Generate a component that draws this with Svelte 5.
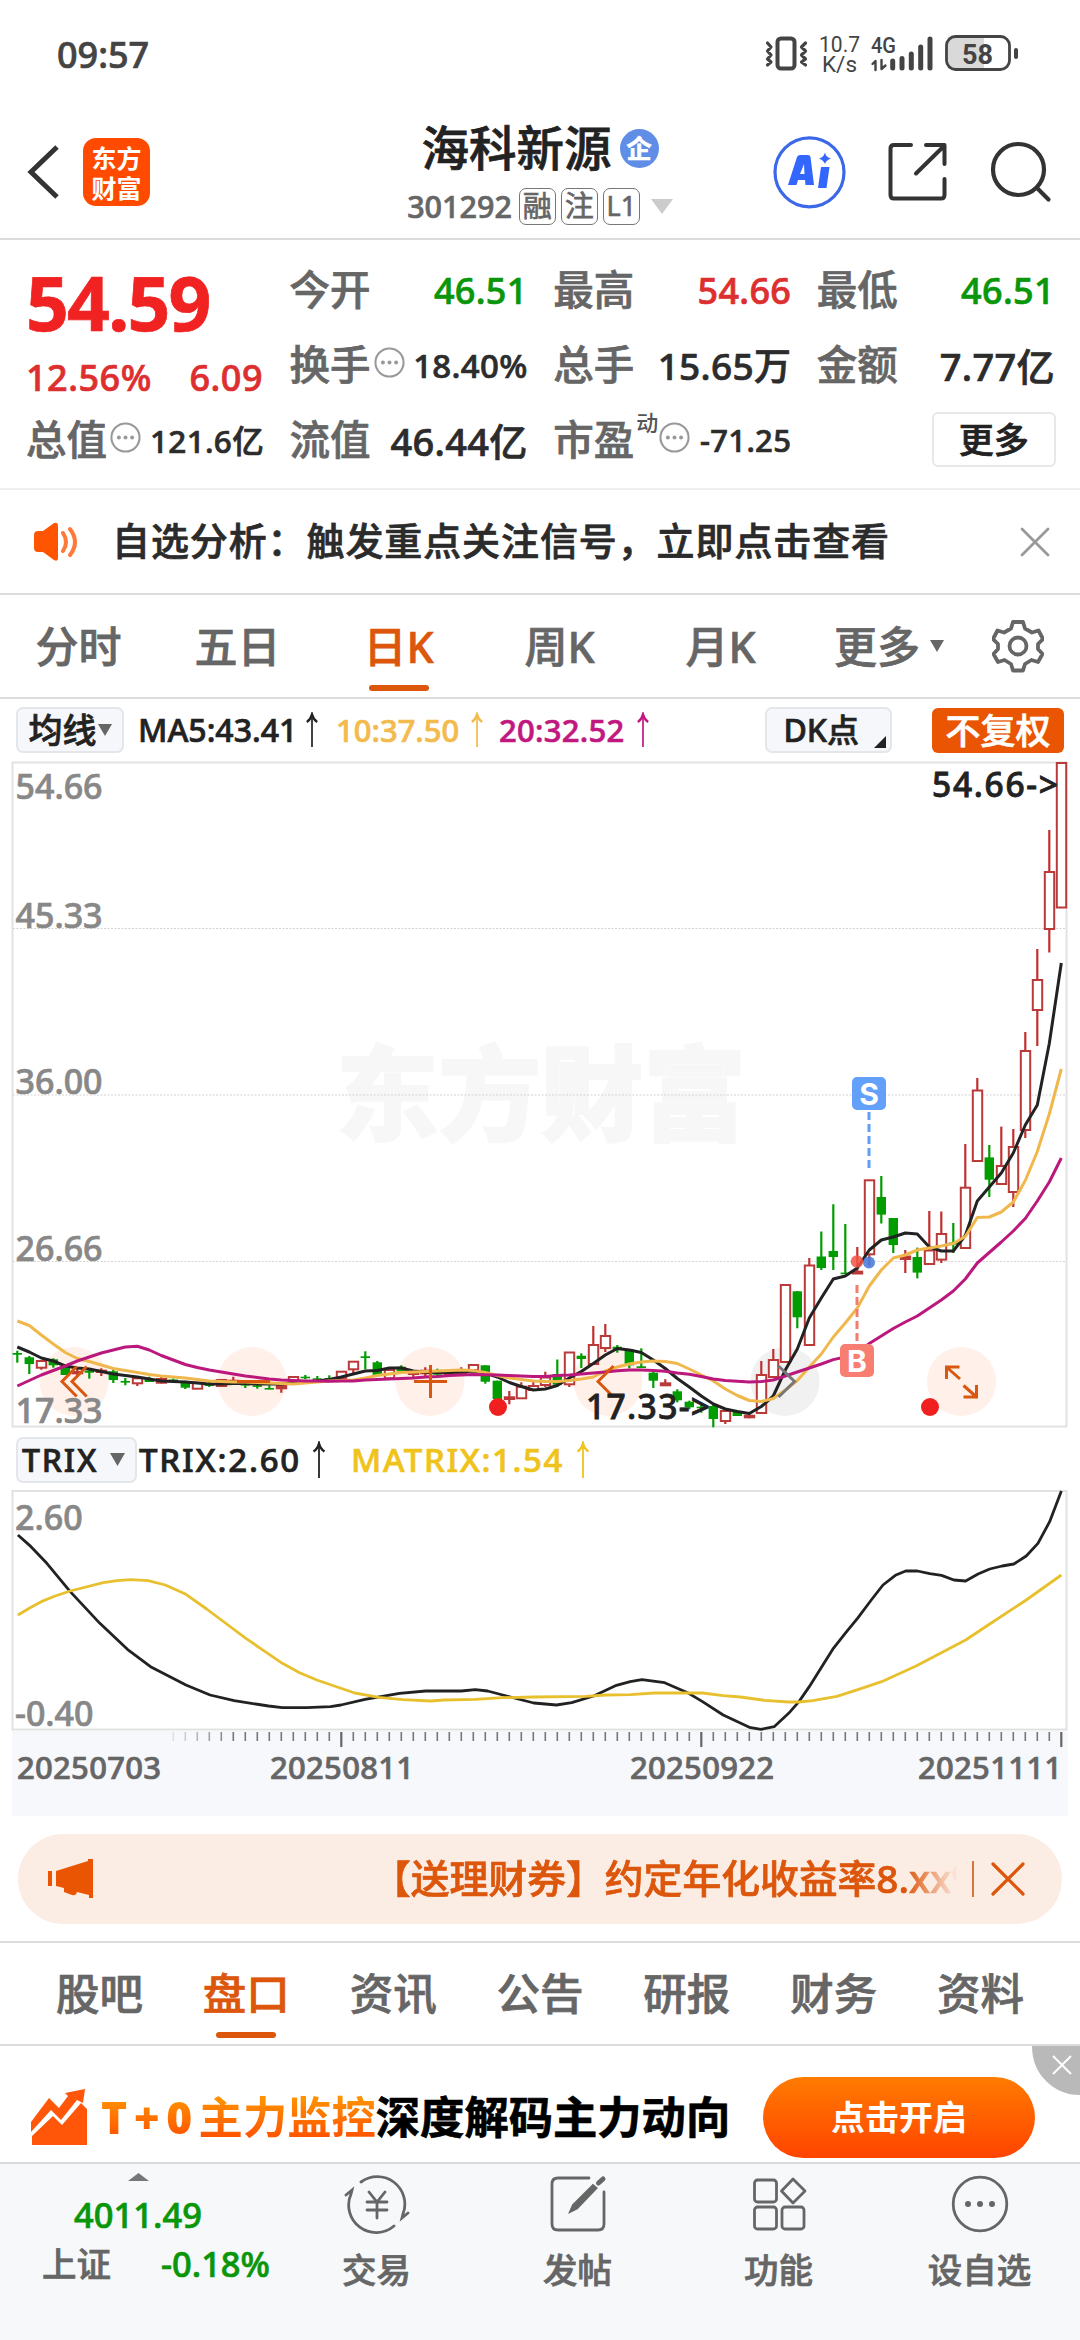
<script>
  const quotes = [
    { label: '今开', value: '46.51', tone: 'down', size: 36 },
    { label: '最高', value: '54.66', tone: 'up', size: 36 },
    { label: '最低', value: '46.51', tone: 'down', size: 36 },
    { label: '换手', value: '18.40%', info: true, size: 33 },
    { label: '总手', value: '15.65万', size: 37 },
    { label: '金额', value: '7.77亿', size: 38 },
    { label: '总值', value: '121.6亿', info: true, size: 31.5 },
    { label: '流值', value: '46.44亿', size: 38 },
    { label: '市盈', sup: '动', value: '-71.25', info: true, size: 31 }
  ];

  const periods = ['分时', '五日', '日K', '周K', '月K'];
  const sections = ['股吧', '盘口', '资讯', '公告', '研报', '财务', '资料'];

  const step = 12;
  const firstX = 17.3;
  const cx = (i) => firstX + i * step;

  // Each candle: direction, high, body top, body bottom, low (canvas y)
  const candles = [
    ['g', 1350.7, 1353, 1354.7, 1362.7], ['g', 1356, 1357.3, 1364, 1374], ['r', 1360, 1361, 1367.7, 1369.7],
    ['g', 1358.3, 1359.3, 1365.3, 1367.7], ['g', 1367, 1367.3, 1375, 1375], ['r', 1368.7, 1372, 1373.3, 1376.7],
    ['g', 1369.3, 1370.7, 1372.7, 1378.7], ['r', 1368.3, 1370.7, 1372, 1376], ['g', 1369, 1371.3, 1380, 1383],
    ['g', 1378, 1381, 1382, 1385.3], ['r', 1377.7, 1378.3, 1383.3, 1386], ['g', 1376.7, 1379.3, 1382, 1382],
    ['r', 1376.7, 1379, 1382.7, 1383.5], ['g', 1378.5, 1379.5, 1381.7, 1382], ['g', 1380.7, 1382, 1387.7, 1389],
    ['r', 1382, 1382.7, 1388.7, 1388.7], ['g', 1380.7, 1383, 1386, 1387], ['r', 1379.3, 1380, 1386, 1386],
    ['r', 1376.7, 1380.7, 1382, 1384], ['g', 1380.7, 1384, 1385, 1388], ['g', 1381.3, 1385.3, 1386.3, 1388.7],
    ['g', 1385.3, 1388, 1389.3, 1389.3], ['r', 1384, 1386, 1388.3, 1392.7], ['r', 1376.7, 1377, 1381.3, 1381.3],
    ['g', 1375, 1376.7, 1378, 1379.3], ['g', 1376, 1378.3, 1379.3, 1381], ['g', 1375.3, 1378, 1379, 1381],
    ['r', 1371, 1371.7, 1378.3, 1378.3], ['r', 1361.3, 1361.7, 1369.3, 1373.3], ['g', 1351.3, 1356.3, 1358, 1369.3],
    ['g', 1361, 1362.3, 1376, 1376], ['r', 1367.7, 1370, 1378.3, 1378.3], ['g', 1365.3, 1366.7, 1371.3, 1372],
    ['r', 1370, 1372.7, 1374, 1378], ['r', 1367.3, 1370.7, 1373.3, 1377], ['g', 1368.7, 1371.3, 1374.7, 1376.7],
    ['r', 1370, 1371.3, 1374, 1376], ['r', 1367.3, 1370, 1373.3, 1374], ['r', 1364.7, 1365, 1370, 1370],
    ['g', 1365.3, 1365.3, 1381.7, 1383.7], ['g', 1380.7, 1380.7, 1399, 1400], ['r', 1391, 1397.3, 1399, 1404.3],
    ['r', 1382.3, 1386.7, 1398.3, 1398.3], ['r', 1380, 1386, 1390, 1390], ['r', 1371.7, 1377.5, 1385, 1387],
    ['g', 1359.5, 1374, 1384.7, 1387], ['r', 1352, 1352.5, 1384.3, 1387], ['g', 1353.3, 1355.7, 1359, 1368],
    ['r', 1326, 1345, 1364, 1364.3], ['r', 1324, 1336, 1348, 1352], ['g', 1345, 1346.7, 1349, 1352.7],
    ['g', 1349.3, 1349.3, 1365.3, 1368.3], ['g', 1348.3, 1366.3, 1368, 1368], ['g', 1372, 1372.7, 1380.7, 1388],
    ['r', 1379.3, 1383.3, 1385.3, 1386], ['g', 1389.3, 1391.3, 1400.3, 1402.3], ['g', 1400.7, 1401.7, 1407.3, 1409.3],
    ['g', 1404, 1406.7, 1408, 1412.7], ['g', 1405, 1406, 1419, 1427.3], ['r', 1409, 1411, 1421, 1424],
    ['g', 1410.7, 1411.3, 1416, 1416], ['r', 1414, 1415.7, 1417.3, 1418.3], ['r', 1361, 1375, 1413, 1413],
    ['r', 1349, 1360, 1377, 1377], ['r', 1284.3, 1285, 1362, 1362], ['g', 1291, 1291.3, 1317.3, 1328.3],
    ['r', 1258, 1265.5, 1345, 1345], ['g', 1231.5, 1256.5, 1268, 1270], ['g', 1204.3, 1251, 1257, 1270],
    ['g', 1224, 1272.6, 1274, 1274], ['r', 1247, 1271.7, 1273.5, 1273.5], ['r', 1179.7, 1180.3, 1254.3, 1266],
    ['g', 1176, 1197, 1214.6, 1223.5], ['g', 1218, 1218, 1245, 1253], ['r', 1250, 1256.5, 1259, 1273],
    ['g', 1247.6, 1257, 1272.6, 1278.4], ['r', 1211, 1250.5, 1264, 1265], ['r', 1211.4, 1234, 1259.6, 1263],
    ['g', 1223, 1242.5, 1244.5, 1253], ['r', 1144, 1187.7, 1248, 1248], ['r', 1078, 1090.5, 1161, 1161],
    ['g', 1145, 1157.4, 1179.7, 1197], ['r', 1126.6, 1166, 1184, 1184], ['r', 1129, 1147, 1192, 1207],
    ['r', 1032, 1051, 1130, 1138], ['r', 949, 980, 1010, 1046], ['r', 830, 872, 929, 952.5], ['r', 763, 763, 907.5, 908]
  ];

  const ma5 = [1347, 1352, 1358, 1361, 1366, 1368, 1369, 1371.5, 1374, 1375.5, 1377, 1379, 1381, 1381.5, 1382, 1383, 1384, 1384, 1383.5, 1383.5, 1384, 1384, 1384, 1383, 1382, 1381, 1379.5, 1377, 1374, 1371, 1370.5, 1368, 1368, 1371, 1372, 1372.5, 1372.5, 1372, 1371, 1373, 1377, 1382.5, 1386.5, 1390, 1389, 1385.5, 1378, 1371.5, 1363.5, 1355, 1348.5, 1350, 1352.5, 1360, 1368.5, 1378.5, 1387, 1396, 1404, 1409, 1411.5, 1413.5, 1406.5, 1396, 1370, 1349, 1318, 1298, 1279, 1276, 1268, 1250, 1240, 1237, 1233, 1234, 1247, 1251, 1251, 1235.5, 1201, 1187, 1173, 1153, 1125, 1105, 1043.5, 963];
  const ma10 = [1321, 1325.5, 1335, 1344, 1352.5, 1358.5, 1361.5, 1365, 1368.5, 1370.5, 1372.5, 1374.5, 1376, 1377, 1378, 1379.5, 1381, 1381.5, 1382, 1382, 1382.5, 1383, 1383.5, 1384, 1383, 1382, 1381, 1380.5, 1380, 1378, 1375.5, 1374, 1372.5, 1372, 1371.5, 1371, 1370.5, 1370, 1370.5, 1372.5, 1375.5, 1378, 1379.5, 1381, 1381.5, 1381.5, 1380.5, 1379, 1377, 1371, 1367, 1364, 1362, 1361, 1361.5, 1363.5, 1369, 1375, 1381, 1389, 1395.5, 1400.5, 1401.5, 1398.5, 1390, 1380.5, 1367, 1354, 1337, 1323, 1308, 1286, 1270, 1258, 1255, 1250, 1248, 1246, 1243.5, 1236.5, 1217.5, 1217, 1212, 1202, 1180.5, 1151.5, 1114, 1069];
  const ma20 = [1386, 1380.5, 1375, 1370.5, 1366, 1361, 1357, 1353, 1350, 1347, 1346.3, 1350, 1355.5, 1360, 1364.5, 1367.5, 1370, 1372, 1374, 1376, 1377.5, 1379, 1380, 1380.5, 1381, 1381, 1381.3, 1381, 1381, 1380, 1379.5, 1379, 1378.5, 1378, 1377, 1376.5, 1375.5, 1375, 1374.5, 1374.7, 1375, 1375.5, 1376, 1376.5, 1376.5, 1375.5, 1375, 1374, 1373, 1372, 1370.7, 1370, 1370, 1370.5, 1371.3, 1373, 1374.3, 1376.5, 1379, 1380.5, 1381.3, 1382, 1381.5, 1380, 1376, 1372, 1368, 1364, 1359.6, 1357, 1354, 1343.5, 1336, 1328.5, 1322, 1316, 1308, 1300, 1291, 1279, 1263, 1252.5, 1242, 1231, 1218.5, 1201, 1182, 1158];
  const points = (ys) => ys.map((y, i) => `${cx(i)},${y}`).join(' ');

  const ticks = Array.from({ length: 75 }, (_, k) => k + 13);
  const tickAlpha = (i) => Math.min(1, (i - 12) / 6);
</script>

{#snippet info()}
  <svg class="info" viewBox="0 0 30 30"><circle cx="15" cy="15" r="13.6" fill="none" stroke="#999" stroke-width="2" /><g fill="#999"><circle cx="8.6" cy="15" r="1.9" /><circle cx="15" cy="15" r="1.9" /><circle cx="21.4" cy="15" r="1.9" /></g></svg>
{/snippet}

{#snippet arrow()}
  <svg class="arrow" viewBox="0 0 16 38" fill="none" stroke="currentColor"><path d="M8 2V37" stroke-width="1.8" /><path d="M2.500 10.500Q6.500 8 8 2.500Q9.500 8 13.500 10.500" stroke-width="2.4" /></svg>
{/snippet}

<div class="screen">
  <div class="status">
    <span class="clock">09:57</span>
    <svg width="262" height="50" viewBox="760 28 262 50">
      <g fill="none" stroke="#444" stroke-linecap="round" stroke-linejoin="round">
        <rect x="777.500" y="38.500" width="17" height="30" rx="3.500" stroke-width="4" />
        <path d="M767.500 43l3.500 4-3.500 4 3.500 4-3.500 4 3.500 3-3.500 3M805.500 43l-4 4 4 4-4 4 4 4-4 3 4 3" stroke-width="3.200" />
        <path d="M875.500 70v-9l-3 3M881.500 60v9l4-3.500" stroke-width="2.400" />
        <path d="M892.700 61v7M902 58.500v9.500M911.300 54v14M920.700 47v21M930 39v29" stroke-width="5" />
      </g>
      <rect x="948" y="37" width="36" height="32" fill="#d9d9d9" />
      <rect x="946.500" y="36.500" width="63" height="33" rx="9" fill="none" stroke="#444" stroke-width="2.800" />
      <rect x="1014" y="48" width="4" height="11" rx="2" fill="#444" />
      <g fill="#444">
        <text x="819" y="52" class="net" textLength="41" lengthAdjust="spacingAndGlyphs">10.7</text>
        <text x="822" y="72" class="net" textLength="35" lengthAdjust="spacingAndGlyphs">K/s</text>
        <text x="871" y="53" class="gen" textLength="25" lengthAdjust="spacingAndGlyphs">4G</text>
        <text x="962" y="63.500" class="batt" textLength="31" lengthAdjust="spacingAndGlyphs">58</text>
      </g>
    </svg>
  </div>

  <header>
    <div class="side">
      <svg width="34" height="60" viewBox="0 0 34 60"><path d="M30 5L4 30L30 55" fill="none" stroke="#333" stroke-width="5" /></svg>
      <div class="logo"><span>东方</span><span>财富</span></div>
    </div>
    <div class="title">
      <div class="name">海科新源<i>企</i></div>
      <div class="code">301292<b>融</b><b>注</b><b class="l1">L1</b><svg width="22" height="15" viewBox="0 0 22 15"><path d="M0 0H22L11 15Z" fill="#ccc" /></svg></div>
    </div>
    <div class="side right">
      <svg width="74" height="74" viewBox="771 135 74 74">
        <circle cx="808.500" cy="172.300" r="34.500" fill="#fff" stroke="#3b68e8" stroke-width="3.200" />
        <path fill="#3366fc" fill-rule="evenodd" d="M787 185L796 157Q797 155 799 155H807Q809 155 809.500 157L813 185H804.500L804 180H797L795.500 185ZM799 174H803.500L803 164ZM820 167H828.500L825.500 188H817ZM824 152.500Q825 157.500 830 158.500Q825 160 824 164Q822.500 160 818 158.500Q822.500 157.500 824 152.500Z" />
      </svg>
      <svg width="60" height="60" viewBox="887 143 60 60" fill="none" stroke="#333" stroke-width="4" stroke-linecap="round" stroke-linejoin="round"><path d="M910 146H893Q889.500 146 889.500 149.500V196Q889.500 199.500 893 199.500H940Q943.500 199.500 943.500 196V180M925 146H943.500V165M943 147L915 174.500" /></svg>
      <svg width="62" height="62" viewBox="990 141 62 62" fill="none" stroke="#333" stroke-width="4.200" stroke-linecap="round"><circle cx="1018.500" cy="169.500" r="25.500" /><path d="M1037 188L1048.500 199.500" /></svg>
    </div>
  </header>

  <section class="quote">
    <div class="price"><strong>54.59</strong><div><span>12.56%</span><span>6.09</span></div></div>
    {#each quotes as q}
      <div class="cell">
        <span class="label">{q.label}</span>{#if q.sup}<sup>{q.sup}</sup>{/if}{#if q.info}{@render info()}{/if}
        <span class="val {q.tone ?? ''}" style="font-size:{q.size}px">{q.value}</span>
      </div>
    {/each}
    <div class="cell end"><button class="more">更多</button></div>
  </section>

  <section class="notice">
    <svg width="44" height="40" viewBox="0 0 44 40"><path d="M0 13Q0 9 4 9H9L20 1Q24 0 24 4V36Q24 40 20 38L9 30H4Q0 30 0 26Z" fill="#ff5500" /><path d="M29 11Q35 20 29 29M36 7Q46 20 36 33" fill="none" stroke="#ff7a38" stroke-width="4" stroke-linecap="round" /></svg>
    <p>自选分析：触发重点关注信号，立即点击查看</p>
    <svg width="30" height="30" viewBox="0 0 30 30"><path d="M2 2L28 28M28 2L2 28" stroke="#999" stroke-width="2.800" stroke-linecap="round" /></svg>
  </section>

  <nav class="periods">
    {#each periods as p}<span class:active={p === '日K'}>{p}</span>{/each}
    <span class="drop">更多<svg width="14" height="12" viewBox="0 0 14 12"><path d="M0 0H14L7 12Z" fill="#666" /></svg></span>
    <svg class="gear" width="52" height="54" viewBox="-26 -27 52 54" fill="none" stroke="#666" stroke-width="3.800" stroke-linejoin="round"><path d="M-5 -24H5L7 -17.500L14 -13.500L20.500 -15.500L25 -7L20 -2V3L24.500 8L20 16L13.500 14L7 18L5 24.500H-5L-7 18L-13.500 14L-20 16L-24.500 8L-20 3V-2L-25 -7L-20.500 -15.500L-14 -13.500L-7 -17.500Z" /><circle r="8.500" /></svg>
  </nav>

  <div class="indicators main">
    <button class="pill ma">均线<svg width="14" height="12" viewBox="0 0 14 12"><path d="M0 0H14L7 12Z" fill="#666" /></svg></button>
    <span class="v1">MA5:43.41</span>{@render arrow()}
    <span class="v2">10:37.50</span><i class="amber">{@render arrow()}</i>
    <span class="v3">20:32.52</span><i class="pink">{@render arrow()}</i>
    <button class="pill dk">DK点<svg width="12" height="12" viewBox="0 0 12 12"><path d="M12 0V12H0Z" fill="#222" /></svg></button>
    <button class="adjust">不复权</button>
  </div>

  <svg class="kline" width="1080" height="668" viewBox="0 761 1080 668">
    <text class="watermark" x="336" y="1133" textLength="410" lengthAdjust="spacingAndGlyphs">东方财富</text>
    <g stroke="#d4d4d4" stroke-width="1.200" stroke-dasharray="2 1.500"><path d="M13 928.500H1067M13 1095H1067M13 1261.500H1067" /></g>
    <rect x="12.500" y="762.500" width="1054" height="664" fill="none" stroke="#e2e2e2" stroke-width="2" />
    <g fill="#fff0e9">
      {#each [74, 252, 430, 608, 961.5] as x}<circle cx={x} cy="1381.500" r="34.500" />{/each}
    </g>
    <circle cx="785" cy="1381.500" r="34.500" fill="#f1f1f1" />
    <g class="axis">
      <text x="15.500" y="798.500">54.66</text><text x="15.500" y="927.500">45.33</text><text x="15.500" y="1093.500">36.00</text><text x="15.500" y="1260.500">26.66</text><text x="15.500" y="1423">17.33</text>
    </g>
    {#each candles as [dir, high, top, bottom, low], i}
      {#if dir === 'g'}
        <path d="M{cx(i)} {high}V{low}" stroke="#009c00" stroke-width="2.200" />
        <rect x={cx(i) - 4.7} y={top} width="9.400" height={Math.max(1.6, bottom - top)} fill="#009c00" />
      {:else}
        <path d="M{cx(i)} {high}V{top}M{cx(i)} {bottom}V{low}" stroke="#c03030" stroke-width="2.200" />
        <rect x={cx(i) - 4.5} y={top} width="9.400" height={Math.max(1, bottom - top)} fill={bottom - top > 2.5 ? '#fff' : '#c03030'} stroke="#b93a38" stroke-width="2" />
      {/if}
    {/each}
    <g fill="none" stroke-width="3" stroke-linejoin="round">
      <polyline points={points(ma5)} stroke="#222" />
      <polyline points={points(ma10)} stroke="#f0b84c" />
      <polyline points={points(ma20)} stroke="#ba187c" />
    </g>
    <g fill="none" stroke="#d9570f" stroke-width="3">
      <path d="M76.700 1366.500L62 1381.500L76.700 1396.500M86.700 1366.500L72 1381.500L86.700 1396.500M237 1381.500H270M414 1381.500H447M430.500 1365V1398M613.500 1366L598 1381.500L613.500 1397" />
      <path d="M946.500 1379V1367H959.500M947 1367.500L960 1379M976.500 1385V1397H963.500M976 1396.500L963.500 1385.500" />
      <path d="M778.600 1366L794.500 1381.500L778.600 1397" stroke="#777" />
    </g>
    <circle cx="498" cy="1407" r="9" fill="#f02020" /><circle cx="930" cy="1407" r="9" fill="#f02020" />
    <circle cx="857" cy="1261.500" r="6.200" fill="#f25343" opacity=".85" /><circle cx="869" cy="1262.500" r="6" fill="#4d7ddd" opacity=".9" />
    <path d="M869 1112V1169" stroke="#609ff0" stroke-width="3" stroke-dasharray="8 4" />
    <path d="M857 1285V1343" stroke="#f47c6b" stroke-width="3" stroke-dasharray="8 4" />
    <rect x="852" y="1077" width="34" height="33" rx="5" fill="#62a0fa" />
    <rect x="840" y="1344" width="34" height="33" rx="5" fill="#f77e70" />
    <text class="tag" x="869" y="1104.500">S</text><text class="tag" x="857" y="1371.500">B</text>
    <g class="mark"><text x="932" y="797" textLength="126">54.66-&gt;</text><text x="586" y="1418.500" textLength="124">17.33-&gt;</text></g>
  </svg>

  <div class="indicators sub">
    <button class="pill trix">TRIX<svg width="15" height="13" viewBox="0 0 15 13"><path d="M0 0H15L7.500 13Z" fill="#666" /></svg></button>
    <span class="t1">TRIX:2.60</span>{@render arrow()}
    <span class="t2">MATRIX:1.54</span><i class="gold">{@render arrow()}</i>
  </div>

  <svg class="osc" width="1080" height="326" viewBox="0 1490 1080 326">
    <rect x="12" y="1731" width="1056" height="85" fill="#f7f8fb" />
    <rect x="12.500" y="1491" width="1054" height="238.500" fill="none" stroke="#e2e2e2" stroke-width="2" />
    <g class="axis"><text x="15" y="1529.500">2.60</text><text x="15" y="1725.500">-0.40</text></g>
    <g transform="translate(0 1420) scale(.68875 .33333)" fill="none" stroke-width="2.800" stroke-linejoin="round">
      <path vector-effect="non-scaling-stroke" stroke="#222" d="M26 345L45 380L68 430L102 515L145 610L185 688L220 742L270 795L305 825L340 842L390 858L410 863L445 863L480 860L495 855L530 838L580 820L618 813L670 813L690 809L708 813L730 825L775 849L808 855L830 848L862 828L895 796L915 785L932 779L965 788L1000 820L1020 845L1050 885L1088 922L1105 928L1124 920L1145 880L1160 845L1175 800L1210 685L1228 638L1245 595L1265 540L1282 495L1300 466L1315 453L1332 453L1350 461L1367 466L1385 480L1402 483L1420 462L1437 447L1455 438L1472 432L1490 408L1507 370L1524 305L1541 213" />
      <path vector-effect="non-scaling-stroke" stroke="#e8c02e" d="M26 585L45 562L60 545L80 528L102 513L150 488L170 482L190 479L215 482L240 495L270 523L300 567L357 655L385 695L410 730L435 758L460 780L515 819L550 832L585 839L625 843L645 840L690 838L730 833L775 831L850 829L880 825L915 824L950 819L1020 819L1050 827L1075 831L1110 841L1145 846L1160 846L1180 842L1215 829L1250 806L1280 785L1330 738L1402 660L1437 612L1490 540L1541 465" />
    </g>
    {#each ticks as i}
      {#if i === 27 || i === 57 || i === 87}
        <path d="M{cx(i)} 1732V1747" stroke="#666" stroke-width="2.200" />
      {:else}
        <path d="M{cx(i)} 1732V1741" stroke="#777" stroke-width="1.600" opacity={tickAlpha(i)} />
      {/if}
    {/each}
    <g class="dates">
      <text x="17" y="1778.500" textLength="144">20250703</text><text x="270" y="1778.500" textLength="144">20250811</text>
      <text x="630" y="1778.500" textLength="144">20250922</text><text x="918" y="1778.500" textLength="144">20251111</text>
    </g>
  </svg>

  <div class="promo">
    <svg width="47" height="40" viewBox="0 0 47 40" fill="#ea5504"><path d="M1 12H5V27H1ZM9 12L41 2V0H46V39H42V36L30 33Q29 37 25 36L17 33V29L9 27Z" /></svg>
    <p>【送理财券】约定年化收益率8.xx%</p>
    <hr />
    <svg width="34" height="34" viewBox="0 0 34 34"><path d="M2 2L32 32M32 2L2 32" stroke="#dc560c" stroke-width="3.200" stroke-linecap="round" /></svg>
  </div>

  <nav class="sections">
    {#each sections as s}<span class:active={s === '盘口'}>{s}</span>{/each}
  </nav>

  <div class="ad">
    <svg width="58" height="56" viewBox="0 0 58 56" fill="#ff560a"><path d="M1 56V47L22 27L31 36L50 14L56 20V56Z" /><path d="M0 43V33L18 9L28 19L37 7L34 4L54 0L52 14L46 11L30 31L20 21Z" /></svg>
    <p><em><b>T+0</b>主力监控</em>深度解码主力动向</p>
    <button>点击开启</button>
    <svg class="shut" width="48" height="49" viewBox="0 0 48 49"><path d="M0 0H48V49Q28 49 14 35Q0 21 0 0Z" fill="#b9b9b9" /><path d="M21 10L39 28M39 10L21 28" stroke="#fff" stroke-width="2" /></svg>
  </div>

  <footer>
    <div class="index">
      <svg width="21" height="8" viewBox="0 0 21 8"><path d="M0 8L10.500 0L21 8Z" fill="#777" /></svg>
      <b>4011.49</b>
      <div><span>上证</span><em>-0.18%</em></div>
    </div>
    <div class="item">
      <svg width="66" height="60" viewBox="-33 -30 66 60" fill="none" stroke="#666" stroke-width="2.800" stroke-linecap="round"><path d="M-16 -22A27.500 27.500 0 0 1 26 10L25 14L31 9M17 22A27.500 27.500 0 0 1 -26 -10L-25 -14L-31 -9M-8 -12L0 -2L8 -12M0 -2V14M-10 -2H10M-10 6H10" /></svg>
      <span>交易</span>
    </div>
    <div class="item">
      <svg width="66" height="60" viewBox="-33 -30 66 60" fill="none" stroke="#666" stroke-width="2.800" stroke-linecap="round"><path d="M11 -26H-20Q-26 -26 -26 -20V20Q-26 26 -20 26H20Q26 26 26 20V-12" /><path d="M-8 8L-5 1L15 -19L18.500 -16L-1 4.500Z" fill="#666" stroke-width="2" /><path d="M20.500 -21L25 -25" stroke-width="5" /></svg>
      <span>发帖</span>
    </div>
    <div class="item">
      <svg width="66" height="60" viewBox="-33 -30 66 60" fill="none" stroke="#666" stroke-width="2.800" stroke-linejoin="round"><rect x="-24.500" y="-24" width="22" height="22" rx="3" /><rect x="-24.500" y="3" width="22" height="22" rx="3" /><rect x="3" y="3" width="22" height="22" rx="3" /><path d="M14 -25L26 -13L14 -1L2.500 -13Z" /></svg>
      <span>功能</span>
    </div>
    <div class="item">
      <svg width="66" height="60" viewBox="-33 -30 66 60"><circle r="26.800" fill="none" stroke="#666" stroke-width="2.800" /><g fill="#666"><circle cx="-12" r="3" /><circle r="3" /><circle cx="12" r="3" /></g></svg>
      <span>设自选</span>
    </div>
  </footer>
</div>

<style>
  :global(body) { background: #fff; }
  .screen { width: 1080px; height: 2340px; overflow: hidden; display: flex; flex-direction: column; font-family: "Noto Sans", "Noto Sans CJK SC", sans-serif; font-weight: 500; color: #222; white-space: nowrap; line-height: 1; -webkit-text-stroke: .7px currentColor; }
  .screen > * { flex: none; box-sizing: border-box; }
  svg { flex: none; display: block; }
  button { font: inherit; color: inherit; padding: 0; box-sizing: border-box; line-height: 1; }
  i, em { font-style: normal; }
  p { margin: 0; }

  .status { height: 104px; padding: 28px 58px 0 57px; display: flex; justify-content: space-between; align-items: flex-start; }
  .clock { font-size: 36px; line-height: 53px; color: #444; }
  .net { font: 400 22.500px Roboto, sans-serif; -webkit-text-stroke: 0; }
  .gen { font: 500 21.500px Roboto, sans-serif; }
  .batt { font: 700 28px Roboto, sans-serif; -webkit-text-stroke: 0; }

  header { height: 136px; border-bottom: 2px solid #dcdcdc; display: grid; grid-template-columns: 300px 1fr 300px; }
  .side { display: flex; align-items: center; padding: 2px 0 0 27px; gap: 22px; }
  .logo { width: 67px; height: 68px; border-radius: 13px; background: #ff4a00; color: #fff; display: flex; flex-direction: column; align-items: center; justify-content: center; gap: 3px; font: 700 25px/27px "Noto Sans CJK SC", serif; -webkit-text-stroke: 0; }
  .right { justify-content: flex-end; padding: 2px 28px 0 0; gap: 42px; }
  .title { display: flex; flex-direction: column; align-items: center; padding-top: 18px; }
  .name { display: flex; align-items: center; gap: 8px; font-size: 47.500px; height: 52px; line-height: 52px; }
  .name i { width: 39px; height: 39px; border-radius: 50%; background: #608ee6; color: #fff; font-size: 25px; line-height: 38px; text-align: center; font-weight: 700; }
  .code { display: flex; align-items: center; font-size: 30.500px; color: #666; margin-top: 13px; height: 38px; }
  .code b { box-sizing: border-box; width: 37px; height: 37px; border: 1.500px solid #777; border-radius: 7px; margin-left: 5px; font-size: 29px; font-weight: 400; line-height: 33px; text-align: center; }
  .code b:first-of-type { margin-left: 7px; }
  .code .l1 { font-size: 27px; }
  .code svg { margin-left: 11px; }

  .quote { height: 250px; border-bottom: 2px solid #eee; padding: 14px 26px 0 26px; display: grid; grid-template-columns: repeat(4, 237px); grid-auto-rows: 75px; column-gap: 26.600px; }
  .price { grid-row: span 2; color: #f12222; padding-top: 10px; }
  .price strong { display: block; font-size: 75px; line-height: 76px; letter-spacing: -1.800px; font-weight: 700; }
  .price div { display: flex; justify-content: space-between; color: #dd2f2f; font-size: 36px; line-height: 40px; margin-top: 18px; letter-spacing: .5px; }
  .cell { display: flex; align-items: center; }
  .label { font-size: 40.500px; color: #666; font-weight: 500; margin-top: -2px; }
  .cell sup { font-size: 22px; color: #555; align-self: flex-start; margin: 7px -2px 0 2px; -webkit-text-stroke: 0; }
  .info { width: 31px; height: 31px; margin: -8px 0 0 3px; }
  .val { margin: -2px -1px 0 auto; color: #2c2c2c; letter-spacing: .3px; }
  .val.up { color: #dd2f2f; }
  .val.down { color: #0a960a; }
  .end { justify-content: flex-end; }
  .more { width: 124px; height: 55px; border: 2px solid #e6e8ea; border-radius: 6px; background: #fff; font-size: 35px; margin: -4px -2px 0 0; }

  .notice { height: 105px; border-bottom: 2px solid #dcdcdc; display: flex; align-items: center; padding: 0 30px 0 34px; }
  .notice p { font-size: 38px; letter-spacing: .9px; margin: -3px auto 0 34px; color: #2b2b2b; }

  .periods { height: 104px; border-bottom: 2px solid #dcdcdc; display: grid; grid-template-columns: 157px repeat(4, 161px) 176px 82px; align-items: center; font-size: 43px; color: #666; }
  .periods span, .sections span { height: 100%; display: flex; align-items: center; justify-content: center; position: relative; }
  .periods .gear { justify-self: center; }
  .active { color: #dc560c !important; }
  .active::after { content: ''; position: absolute; left: calc(50% - 30px); bottom: 6px; width: 60px; height: 6px; border-radius: 3px; background: #dc560c; }
  .drop svg { margin-left: 10px; }

  .indicators { display: flex; align-items: center; padding: 0 16px; font-size: 32px; }
  .main { height: 62px; }
  .sub { height: 61px; }
  .pill { height: 46px; border: 2px solid #e3e6ea; border-radius: 7px; background: #f6f7fa; display: flex; align-items: center; justify-content: center; }
  .ma { width: 108px; font-size: 34px; }
  .ma svg { margin-left: 1px; }
  .arrow { width: 16px; height: 38px; }
  .main .arrow { height: 36px; }
  .v1 { width: 157px; margin: 0 9px 0 14px; }
  .v2 { width: 122px; margin: 0 11px 0 16px; color: #f3bb4e; font-size: 31px; }
  .v3 { width: 126px; margin: 0 10px 0 14px; color: #c11880; font-size: 31px; letter-spacing: .3px; }
  .amber { color: #f3bb4e; }
  .pink { color: #c11880; }
  .gold { color: #efc31c; }
  .dk { width: 127px; margin-left: auto; align-items: center; justify-content: flex-end; padding-right: 4px; }
  .dk svg { margin: 24px 0 0 15px; }
  .adjust { width: 132px; height: 45px; margin-left: 40px; border: 0; border-radius: 6px; background: #ea5504; color: #fff; font-size: 35px; }

  svg text { -webkit-text-stroke: 0; }
  .axis { font-size: 34px; fill: #888; stroke: #888; stroke-width: .7; }
  .mark { font-size: 33.500px; fill: #222; stroke: #222; stroke-width: .8; }
  .watermark { font-size: 103px; font-weight: 900; fill: #f7f7f7; stroke: #f7f7f7; stroke-width: 2; }
  .tag { font: 700 30px Inter, sans-serif; fill: #fff; text-anchor: middle; }
  .dates { font-size: 31px; fill: #666; stroke: #666; stroke-width: .7; }

  .trix { width: 121px; letter-spacing: 1.800px; justify-content: flex-start; padding-left: 4px; }
  .trix svg { margin-left: 12px; }
  .t1 { font-size: 33px; letter-spacing: 1.800px; width: 162px; margin: 0 10px 0 2px; }
  .t2 { font-size: 33px; letter-spacing: 1.600px; width: 213px; margin: 0 11px 0 24px; color: #efc31c; }

  .promo { height: 90px; margin: 18px 18px 17px; border-radius: 45px; background: #fcede4; display: flex; align-items: center; padding: 0 37px 0 29px; }
  .promo p { font-size: 38.800px; color: #dc560c; width: 586px; overflow: hidden; line-height: 60px; margin: -2px 0 0 auto; -webkit-mask-image: linear-gradient(90deg, #000 91%, transparent); mask-image: linear-gradient(90deg, #000 91%, transparent); }
  .promo hr { width: 2px; height: 36px; border: 0; background: #d9723c; margin: 0 17px 0 14px; }

  .sections { height: 105px; border-top: 2px solid #dcdcdc; border-bottom: 2px solid #dcdcdc; display: flex; justify-content: space-between; padding: 0 56px; font-size: 43.500px; color: #666; }

  .ad { height: 118px; border-bottom: 2px solid #d8dadd; position: relative; display: flex; align-items: center; padding: 26px 45px 0 31px; }
  .ad p { font-size: 44.300px; font-weight: 700; color: #000; margin-left: 12px; line-height: 60px; display: flex; }
  .ad em { background: linear-gradient(#ff9500 15%, #ff5200 85%); -webkit-background-clip: text; background-clip: text; color: transparent; -webkit-text-stroke: 0; }
  .ad em b { letter-spacing: 6.500px; }
  .ad button { width: 272px; height: 81px; margin-left: auto; border: 0; border-radius: 41px; background: linear-gradient(#ff7b00, #ff4400); color: #fff; font-size: 34px; font-weight: 700; -webkit-text-stroke: 0; }
  .shut { position: absolute; top: 0; right: 0; }

  footer { height: 176px; background: #f6f8fa; display: grid; grid-template-columns: 276px repeat(4, 201px); color: #666; font-size: 34.500px; }
  .index { display: flex; flex-direction: column; align-items: center; padding-top: 9px; }
  .index b { font-weight: 500; color: #0a960a; margin-top: 16px; line-height: 36px; }
  .index div { align-self: stretch; display: flex; justify-content: space-between; padding: 0 6px 0 42px; margin-top: 12px; line-height: 38px; }
  .index em { color: #0a960a; }
  .item { display: flex; flex-direction: column; align-items: center; padding-top: 10px; }
  .item span { margin-top: 18px; line-height: 36px; }
</style>
